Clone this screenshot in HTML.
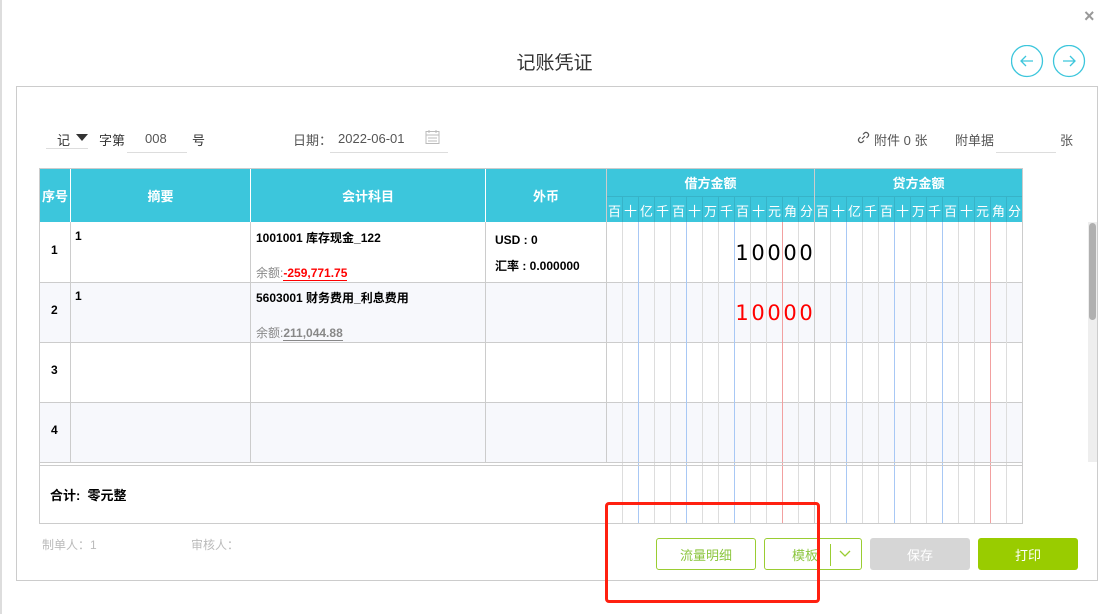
<!DOCTYPE html><html><head><meta charset="utf-8"><style>
*{margin:0;padding:0;box-sizing:border-box}
body{width:1109px;height:614px;background:#fff;position:relative;overflow:hidden;font-family:"Liberation Sans","Noto Sans CJK SC",sans-serif;font-size:12px;color:#333}
.a{position:absolute}
.hd{background:#3cc6dc;color:#fff;font-weight:bold;font-size:13px;display:flex;align-items:center;justify-content:center}
.b{font-weight:bold;color:#000}
.btn{position:absolute;top:538px;height:32px;border-radius:3px;display:flex;align-items:center;justify-content:center;font-size:13px}
</style></head><body>
<div class="a" style="left:0;top:0;width:2px;height:614px;background:#ddd"></div>
<div class="a" style="left:1084px;top:6px;font-size:18px;color:#999;font-weight:bold">×</div>
<div class="a" style="left:0;width:1109px;top:48px;text-align:center;font-size:19px;color:#333">记账凭证</div>
<svg class="a" style="left:1011px;top:45px" width="78" height="34"><g fill="none" stroke="#3cc6dc" stroke-width="1.3"><circle cx="16" cy="16" r="15.5"/><circle cx="58" cy="16" r="15.5"/><path d="M22 16H10M15 11l-5 5 5 5M52 16h12M59 11l5 5-5 5"/></g></svg>
<div class="a" style="left:16px;top:86px;width:1082px;height:495px;border:1px solid #ccc"></div>
<div class="a" style="left:1088px;top:222px;width:9px;height:240px;background:#eee"></div>
<div class="a" style="left:1089px;top:223px;width:7px;height:97px;background:#b0b0b0;border-radius:4px"></div>
<div class="a" style="left:46px;top:148px;width:42px;height:1px;background:#ddd"></div>
<div class="a" style="left:57px;top:130px;font-size:13px">记</div>
<div class="a" style="left:76px;top:134px;width:0;height:0;border-left:6px solid transparent;border-right:6px solid transparent;border-top:7px solid #333"></div>
<div class="a" style="left:99px;top:130px;font-size:13px">字第</div>
<div class="a" style="left:127px;top:152px;width:60px;height:1px;background:#ddd"></div>
<div class="a" style="left:145px;top:131px;font-size:13px;color:#555">008</div>
<div class="a" style="left:192px;top:130px;font-size:13px">号</div>
<div class="a" style="left:293px;top:130px;font-size:13px;color:#555">日期：</div>
<div class="a" style="left:330px;top:152px;width:118px;height:1px;background:#ddd"></div>
<div class="a" style="left:338px;top:131px;font-size:13px;color:#555">2022-06-01</div>
<svg class="a" style="left:425px;top:129px" width="15" height="16"><rect x="1" y="2.5" width="13" height="12" fill="none" stroke="#bbb"/><path d="M1 6h13M4 1v3M11 1v3M3 9h9M3 12h9" stroke="#bbb"/></svg>
<svg class="a" style="left:857px;top:131px" width="13" height="13"><path d="M5 8l3-3M6 3.5l1.5-1.5a2.5 2.5 0 013.5 3.5L9.5 7M7 9.5L5.5 11A2.5 2.5 0 012 7.5L3.5 6" fill="none" stroke="#555" stroke-width="1.2"/></svg>
<div class="a" style="left:874px;top:130px;font-size:13px;color:#555">附件 0 张</div>
<div class="a" style="left:955px;top:130px;font-size:13px;color:#555">附单据</div>
<div class="a" style="left:996px;top:152px;width:60px;height:1px;background:#ddd"></div>
<div class="a" style="left:1060px;top:130px;font-size:13px;color:#555">张</div>
<div class="a" style="left:39px;top:168px;width:984px;height:356px;border:1px solid #ccc"></div>
<div class="a hd" style="left:40px;top:169px;width:30px;height:53px">序号</div>
<div class="a hd" style="left:71px;top:169px;width:179px;height:53px">摘要</div>
<div class="a hd" style="left:251px;top:169px;width:234px;height:53px">会计科目</div>
<div class="a hd" style="left:486px;top:169px;width:120px;height:53px">外币</div>
<div class="a hd" style="left:607px;top:169px;width:207px;height:27px">借方金额</div>
<div class="a hd" style="left:815px;top:169px;width:207px;height:27px">贷方金额</div>
<div class="a" style="left:607px;top:196px;width:415px;height:26px;background:#3cc6dc;border-top:1px solid #37b3c8"></div>
<div class="a" style="left:40px;top:283px;width:982px;height:59px;background:#f7f8fc"></div>
<div class="a" style="left:40px;top:403px;width:982px;height:59px;background:#f7f8fc"></div>
<div class="a" style="left:40px;top:282px;width:982px;height:1px;background:#ccc"></div>
<div class="a" style="left:40px;top:342px;width:982px;height:1px;background:#ccc"></div>
<div class="a" style="left:40px;top:402px;width:982px;height:1px;background:#ccc"></div>
<div class="a" style="left:70px;top:222px;width:1px;height:240px;background:#ccc"></div>
<div class="a" style="left:250px;top:222px;width:1px;height:240px;background:#ccc"></div>
<div class="a" style="left:485px;top:222px;width:1px;height:240px;background:#ccc"></div>
<div class="a" style="left:606px;top:169px;width:1px;height:293px;background:#ccc"></div>
<svg class="a" style="left:606px;top:169px" width="417" height="355" id="g"></svg>
<script>
var g=document.getElementById('g'),s='',u='百十亿千百十万千百十元角分';
for(var k=0;k<2;k++){for(var i=0;i<13;i++){var x=k*208+i*16;
var c='#ddd';if(i==2||i==5||i==8)c='#a8c8f5';if(i==11)c='#f2a0a0';
if(i>0){s+='<line x1="'+(x+.5)+'" y1="53" x2="'+(x+.5)+'" y2="354" stroke="'+c+'"/>';s+='<line x1="'+(x+.5)+'" y1="28" x2="'+(x+.5)+'" y2="53" stroke="#37b3c8"/>';}
s+='<text x="'+(x+8.5)+'" y="47" fill="#fff" font-size="13" text-anchor="middle" font-family="Liberation Sans,Noto Sans CJK SC,sans-serif">'+u[i]+'</text>';}}
s+='<line x1="208.5" y1="0" x2="208.5" y2="354" stroke="#ccc"/>';
var d='10000';for(var j=0;j<5;j++){var x=128+j*16+8;s+='<text x="'+x+'" y="91" font-size="21" text-anchor="middle" font-family="DejaVu Sans,sans-serif" fill="#000">'+d[j]+'</text><text x="'+x+'" y="151" font-size="21" text-anchor="middle" font-family="DejaVu Sans,sans-serif" fill="#f00">'+d[j]+'</text>';}
g.innerHTML=s;
</script>
<div class="a" style="left:40px;top:462px;width:566px;height:61px;background:#fff"></div>
<div class="a" style="left:40px;top:462px;width:982px;height:1px;background:#ccc"></div>
<div class="a" style="left:40px;top:465px;width:982px;height:1px;background:#ccc"></div>
<div class="a b" style="left:51px;top:243px">1</div>
<div class="a b" style="left:51px;top:303px">2</div>
<div class="a b" style="left:51px;top:363px">3</div>
<div class="a b" style="left:51px;top:423px">4</div>
<div class="a b" style="left:75px;top:229px">1</div>
<div class="a b" style="left:75px;top:289px">1</div>
<div class="a b" style="left:256px;top:229px">1001001 库存现金_122</div>
<div class="a" style="left:256px;top:264px;color:#888">余额:<span style="color:#f00;font-weight:bold;border-bottom:1px solid #f00">-259,771.75</span></div>
<div class="a b" style="left:256px;top:289px">5603001 财务费用_利息费用</div>
<div class="a" style="left:256px;top:324px;color:#888">余额:<span style="color:#888;font-weight:bold;border-bottom:1px solid #888">211,044.88</span></div>
<div class="a b" style="left:495px;top:233px">USD : 0</div>
<div class="a b" style="left:495px;top:257px">汇率 : 0.000000</div>
<div class="a b" style="left:50px;top:485px;font-size:13px">合计:&nbsp;&nbsp;零元整</div>
<div class="a" style="left:42px;top:536px;color:#bbb">制单人：1</div>
<div class="a" style="left:191px;top:536px;color:#bbb">审核人：</div>
<div class="btn" style="left:656px;width:100px;border:1px solid #9acd32;color:#8cc63f">流量明细</div>
<div class="btn" style="left:764px;width:98px;border:1px solid #9acd32;color:#8cc63f;justify-content:flex-start;padding-left:27px">模板</div>
<div class="a" style="left:830px;top:544px;width:1px;height:22px;background:#9acd32"></div>
<svg class="a" style="left:838px;top:549px" width="14" height="9"><path d="M2 2l5 5 5-5" fill="none" stroke="#9acd32" stroke-width="1.3"/></svg>
<div class="btn" style="left:870px;width:100px;background:#d6d6d6;color:#fff">保存</div>
<div class="btn" style="left:978px;width:100px;background:#99cc00;color:#fff">打印</div>
<div class="a" style="left:605px;top:502px;width:215px;height:101px;border:3px solid #ff2010;border-radius:4px"></div>
</body></html>
